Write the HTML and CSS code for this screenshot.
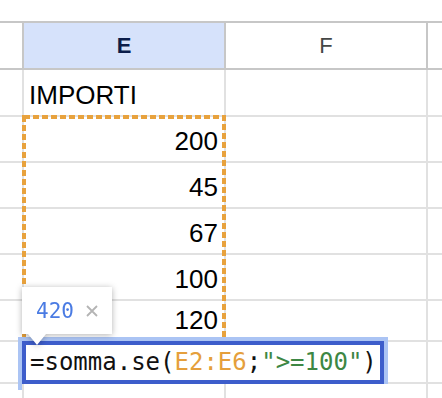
FILE: index.html
```html
<!DOCTYPE html>
<html lang="it">
<head>
    <meta charset="UTF-8">
    <meta name="viewport" content="width=device-width, initial-scale=1.0">
    <title>Somma se</title>
    <link rel="stylesheet" href="styles.css">
</head>
<body>
    <div class="sheet">
        <div class="row head">
            <div class="cell corner"></div>
            <div class="cell col selected">E</div>
            <div class="cell col">F</div>
            <div class="cell col"></div>
        </div>
        <div class="row first">
            <div class="cell rh"></div>
            <div class="cell text">IMPORTI</div>
            <div class="cell"></div>
            <div class="cell"></div>
        </div>
        <div class="row">
            <div class="cell rh"></div>
            <div class="cell num">200</div>
            <div class="cell"></div>
            <div class="cell"></div>
        </div>
        <div class="row">
            <div class="cell rh"></div>
            <div class="cell num">45</div>
            <div class="cell"></div>
            <div class="cell"></div>
        </div>
        <div class="row">
            <div class="cell rh"></div>
            <div class="cell num">67</div>
            <div class="cell"></div>
            <div class="cell"></div>
        </div>
        <div class="row">
            <div class="cell rh"></div>
            <div class="cell num">100</div>
            <div class="cell"></div>
            <div class="cell"></div>
        </div>
        <div class="row short">
            <div class="cell rh"></div>
            <div class="cell num">120</div>
            <div class="cell"></div>
            <div class="cell"></div>
        </div>
        <div class="row active">
            <div class="cell rh"></div>
            <div class="cell"></div>
            <div class="cell"></div>
            <div class="cell"></div>
        </div>
        <div class="row">
            <div class="cell rh"></div>
            <div class="cell"></div>
            <div class="cell"></div>
            <div class="cell"></div>
        </div>

        <!-- range marker E2:E6 -->
        <svg class="range" width="204" height="234" viewBox="0 0 204 234">
            <rect x="2" y="2" width="200" height="230" fill="none" stroke="#e8a23d" stroke-width="4" stroke-dasharray="6 3"/>
        </svg>

        <div class="editor">
            <div class="editor-inner">=somma.se(<span class="ref">E2:E6</span>;<span class="str">"&gt;=100"</span>)</div>
        </div>

        <div class="tip">
            <span class="tip-value">420</span>
            <svg class="tip-close" width="12" height="12" viewBox="0 0 12 12">
                <path d="M1 1 L11 11 M11 1 L1 11" stroke="#b4b4b4" stroke-width="1.8" fill="none"/>
            </svg>
        </div>
    </div>
</body>
</html>
```

FILE: styles.css
```css
body {
    margin: 0;
    padding: 0;
    background: #fff;
    font-family: "Liberation Sans", Arial, sans-serif;
    overflow: hidden;
}
.sheet {
    position: relative;
    margin-top: 21px;
}
.row {
    display: grid;
    grid-template-columns: 22px 202px 202px 1fr;
    height: 46px;
    box-sizing: border-box;
    border-bottom: 2px solid #e1e1e1;
}
.row.first {
    height: 47px;
}
.row.short {
    height: 41px;
}
.row.active {
    height: 42px;
}
.cell {
    box-sizing: border-box;
    border-left: 2px solid #e1e1e1;
    display: flex;
    align-items: flex-end;
    font-size: 26px;
    line-height: 26px;
    color: #000;
    padding-bottom: 7px;
}
.cell.rh {
    border-left: none;
}
.cell.text {
    padding-left: 5px;
}
.cell.num {
    justify-content: flex-end;
    padding-right: 6px;
}
.row.head {
    height: 49px;
    border-top: 2px solid #c7c7c7;
    border-bottom: 2px solid #c7c7c7;
}
.head .cell {
    border-left-color: #c7c7c7;
    align-items: center;
    justify-content: center;
    padding: 0;
    font-size: 22px;
    line-height: 22px;
    color: #444746;
}
.head .corner {
    border-left: none;
}
.head .selected {
    background: #d6e2fb;
    color: #0b1d4a;
    font-weight: bold;
}
.range {
    position: absolute;
    left: 22px;
    top: 94px;
}
.editor {
    position: absolute;
    left: 18px;
    top: 316px;
    width: 370px;
    box-sizing: border-box;
    border: 4px solid #abc4f4;
    border-bottom: none;
}
.editor::after {
    content: "";
    position: absolute;
    left: -4px;
    bottom: -6px;
    width: 4px;
    height: 6px;
    background: #abc4f4;
}
.editor-inner {
    height: 43px;
    box-sizing: border-box;
    border: 4px solid #3d5dcb;
    background: #fff;
    padding-left: 4px;
    font-family: "DejaVu Sans Mono", "Liberation Mono", monospace;
    font-size: 24px;
    line-height: 35px;
    color: #111;
    white-space: nowrap;
    overflow: hidden;
}
.ref {
    color: #e59f3c;
}
.str {
    color: #3d8744;
}
.tip {
    position: absolute;
    left: 22px;
    top: 266px;
    width: 90px;
    height: 47px;
    box-sizing: border-box;
    background: #fff;
    display: flex;
    align-items: center;
    padding-left: 14px;
    filter: drop-shadow(0 1px 3px rgba(0, 0, 0, 0.3));
}
.tip::after {
    content: "";
    position: absolute;
    left: 6px;
    bottom: -11px;
    border-left: 9px solid transparent;
    border-right: 9px solid transparent;
    border-top: 11px solid #fff;
}
.tip-value {
    font-family: "DejaVu Sans Mono", "Liberation Mono", monospace;
    font-size: 21px;
    color: #4a7be3;
}
.tip-close {
    margin-left: 12px;
}
```
